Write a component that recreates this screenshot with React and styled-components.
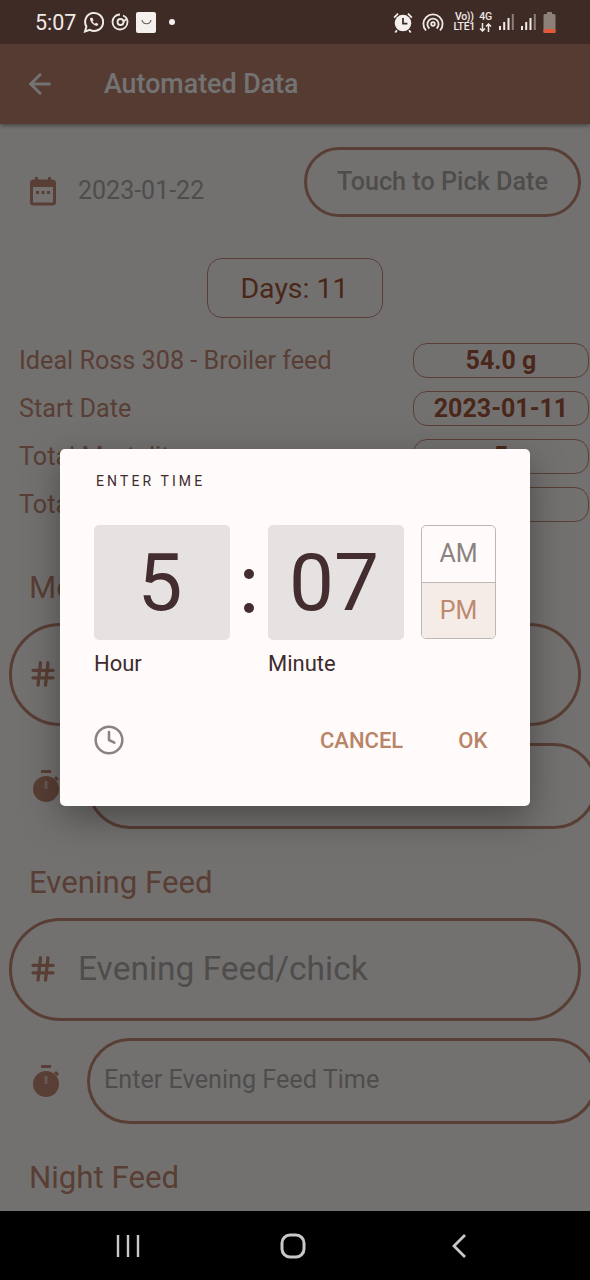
import React from 'react';
import styled, { createGlobalStyle } from 'styled-components';
import { ArrowLeft, Clock, Hash } from 'lucide-react';

const BROWN = '#c48b75';
const MUTED = '#aeaaa8';

const GlobalStyle = createGlobalStyle`
  html, body { margin: 0; padding: 0; background: #000; }
  body { font-family: Roboto, "Liberation Sans", sans-serif; }
  * { box-sizing: border-box; }
`;

const Phone = styled.div`
  position: relative;
  width: 590px;
  height: 1280px;
  overflow: hidden;
  display: flex;
  flex-direction: column;
`;

const StatusBar = styled.div`
  height: 44px;
  flex: none;
  background: #3f2b26;
  color: #efeae6;
  display: flex;
  align-items: center;
  justify-content: space-between;
  padding: 0 34px 0 35px;
`;

const StatusGroup = styled.div`
  display: flex;
  align-items: center;
  gap: 7px;
`;

const Clockface = styled.span`
  font-size: 21.5px;
`;

const BagIcon = styled.span`
  width: 20px;
  height: 21px;
  background: #f4f0ee;
  border-radius: 2px;
  display: flex;
  align-items: center;
  justify-content: center;
`;

const Dot = styled.span`
  width: 6px;
  height: 6px;
  border-radius: 50%;
  background: #f4f0ee;
  margin-left: 6px;
`;

const IconSlot = styled.span`
  display: flex;
  margin-left: ${(p) => p.$left || 0}px;
`;

const TinyStack = styled.span`
  display: flex;
  flex-direction: column;
  align-items: center;
  font-size: 10.5px;
  line-height: 10.5px;
  letter-spacing: -0.3px;
  font-weight: 500;
  color: #efeae6;
  margin: 0 ${(p) => p.$right || 0}px 0 ${(p) => p.$left || 0}px;
`;

const Screen = styled.div`
  flex: 1;
  min-height: 0;
  position: relative;
  display: flex;
  flex-direction: column;
  background: #fffbf9;
  overflow: hidden;
`;

const AppBar = styled.div`
  height: 80px;
  flex: none;
  background: #bd836d;
  color: #fff;
  display: flex;
  align-items: center;
  padding-left: 24px;
  gap: 48px;
  font-size: 26.8px;
  font-weight: 500;
  box-shadow: 0 2px 4px rgba(0, 0, 0, 0.35);
`;

const Content = styled.div`
  display: flex;
  flex-direction: column;
`;

const DateRow = styled.div`
  display: flex;
  align-items: center;
  justify-content: space-between;
  padding: 23px 9px 0 30px;
`;

const DateValue = styled.div`
  display: flex;
  align-items: center;
  gap: 22px;
  font-size: 25px;
  color: ${MUTED};
  padding: 17px 0 0;
`;

const PickButton = styled.div`
  width: 277px;
  height: 70px;
  border: 3px solid ${BROWN};
  border-radius: 35px;
  display: flex;
  align-items: center;
  justify-content: center;
  font-size: 25.2px;
  font-weight: 500;
  color: ${MUTED};
  padding-bottom: 2px;
`;

const DaysBox = styled.div`
  align-self: center;
  width: 176px;
  height: 60px;
  margin: 41px 0 25px -1px;
  border: 1.5px solid ${BROWN};
  border-radius: 15px;
  display: flex;
  align-items: center;
  justify-content: center;
  font-size: 28.5px;
  color: #a4583a;
`;

const InfoList = styled.div`
  display: flex;
  flex-direction: column;
  gap: 13px;
  margin-bottom: 48px;
`;

const InfoRow = styled.div`
  display: flex;
  align-items: center;
  justify-content: space-between;
  padding-left: 19px;
  height: 35px;
`;

const InfoLabel = styled.span`
  font-size: 25.2px;
  color: ${BROWN};
`;

const InfoValue = styled.span`
  width: 176px;
  height: 35px;
  margin-right: 1px;
  border: 1.8px solid ${BROWN};
  border-radius: 14px;
  display: flex;
  align-items: center;
  justify-content: center;
  font-size: 25px;
  font-weight: 700;
  color: #a4583a;
`;

const SectionTitle = styled.div`
  font-size: 31.2px;
  color: ${BROWN};
  padding-left: 29px;
  height: 36px;
  line-height: 36px;
`;

const FeedInput = styled.div`
  width: 572px;
  height: 103px;
  margin: 17px 0 0 9px;
  border: 3px solid ${BROWN};
  border-radius: 52px;
  display: flex;
  align-items: center;
  padding: 0 0 2px 16px;
  gap: 20px;
  font-size: 33.5px;
  color: ${MUTED};
`;

const TimeRow = styled.div`
  display: flex;
  align-items: center;
  margin: 17px 0 36px 0;
  padding-left: 33px;
  & > svg {
    flex: none;
  }
`;

const TimeInput = styled.div`
  width: 510px;
  height: 86px;
  margin-left: 28px;
  flex: none;
  border: 3px solid ${BROWN};
  border-radius: 43px;
  display: flex;
  align-items: center;
  padding: 0 0 3px 14px;
  font-size: 25.2px;
  color: ${MUTED};
`;

const Scrim = styled.div`
  position: absolute;
  inset: 0;
  background: rgba(0, 0, 0, 0.55);
`;

const Dialog = styled.div`
  position: absolute;
  left: 60px;
  top: 405px;
  width: 470px;
  height: 357px;
  background: #fffbfa;
  border-radius: 5px;
  box-shadow: 0 12px 36px rgba(0, 0, 0, 0.35);
  padding: 23px 34px 0 34px;
  color: #3f2b2c;
`;

const DialogTitle = styled.div`
  font-size: 14px;
  letter-spacing: 3.1px;
  line-height: 18px;
  padding-left: 2px;
`;

const Picker = styled.div`
  display: flex;
  margin-top: 35px;
`;

const FieldColumn = styled.div`
  width: 136px;
  display: flex;
  flex-direction: column;
`;

const TimeField = styled.div`
  height: 115px;
  border-radius: 5px;
  background: #e6e2e2;
  display: flex;
  align-items: center;
  justify-content: center;
  padding-right: 4px;
  font-size: 80px;
  line-height: 1;
  color: #432d2f;
`;

const FieldLabel = styled.div`
  margin-top: 10px;
  font-size: 22px;
  line-height: 28px;
`;

const Colon = styled.div`
  width: 38px;
  height: 115px;
  padding-top: 16px;
  display: flex;
  flex-direction: column;
  align-items: center;
  justify-content: center;
  gap: 24px;
  & span {
    width: 10px;
    height: 10px;
    border-radius: 50%;
    background: #432d2f;
  }
`;

const Period = styled.div`
  width: 75px;
  height: 114px;
  margin-left: 17px;
  border: 1.5px solid #bdb8b6;
  border-radius: 5px;
  display: flex;
  flex-direction: column;
  overflow: hidden;
`;

const PeriodOption = styled.div`
  flex: 1;
  display: flex;
  align-items: center;
  justify-content: center;
  font-size: 25px;
  color: ${(p) => (p.$active ? '#bd8a70' : '#8b8382')};
  background: ${(p) => (p.$active ? '#f6ece7' : 'transparent')};
  border-top: ${(p) => (p.$active ? '1.5px solid #bdb8b6' : 'none')};
`;

const DialogActions = styled.div`
  display: flex;
  align-items: center;
  margin: 46px 0 0 -1px;
  color: #8b8382;
`;

const ActionButton = styled.span`
  font-size: 22px;
  font-weight: 500;
  color: #b98468;
  margin-left: ${(p) => p.$left}px;
`;

const NavBar = styled.div`
  height: 69px;
  flex: none;
  background: #000;
  display: flex;
  align-items: center;
`;

const NavButton = styled.span`
  display: flex;
  margin-left: ${(p) => p.$left}px;
`;

const CalendarIcon = () => (
  <svg width="26" height="30" viewBox="0 0 26 30" fill="none">
    <rect x="1.5" y="5" width="23" height="23" rx="2" stroke={BROWN} strokeWidth="3" />
    <rect x="1.5" y="5" width="23" height="6" fill={BROWN} />
    <rect x="5" y="1" width="3" height="5" fill={BROWN} />
    <rect x="18" y="1" width="3" height="5" fill={BROWN} />
    <rect x="6" y="15" width="3" height="3" fill={BROWN} />
    <rect x="11.5" y="15" width="3" height="3" fill={BROWN} />
    <rect x="17" y="15" width="3" height="3" fill={BROWN} />
  </svg>
);

const TimerIcon = () => (
  <svg width="26" height="33" viewBox="0 0 26 33">
    <rect x="8" y="0" width="10" height="3" fill={BROWN} />
    <circle cx="13" cy="19" r="13" fill={BROWN} />
    <path d="M22 7 l3 3" stroke={BROWN} strokeWidth="3" />
    <rect x="11.5" y="11" width="3" height="8" fill="#fffbf9" opacity="0.5" />
  </svg>
);

const WhatsAppIcon = () => (
  <svg width="21" height="22" viewBox="0 0 21 22" fill="none" stroke="#efeae6" strokeWidth="2">
    <path d="M2 20.5 l1.4-5 A9 9 0 1 1 6.8 18.8 Z" />
    <path d="M7 7 c0 4 3 7 7 8 l1.5-2 -2.5-1.2 -1 1 c-1-.5-2-1.5-2.5-2.6 l1-1 -1-2.4 Z" fill="#efeae6" stroke="none" />
  </svg>
);

const SwirlIcon = () => (
  <svg width="18" height="18" viewBox="0 0 18 18" fill="none" stroke="#efeae6" strokeWidth="1.8">
    <path d="M9 1.5 A7.5 7.5 0 1 0 16.5 9 A7 7 0 0 0 12 2.5" />
    <circle cx="9.5" cy="9" r="3" />
    <path d="M12.5 9 L15 6" />
  </svg>
);

const AlarmIcon = () => (
  <svg width="20" height="21" viewBox="0 0 18 19">
    <circle cx="9" cy="10" r="7.5" fill="#f4f0ee" />
    <path d="M9 5.5 V10.5 H13" stroke="#3f2b26" strokeWidth="1.6" fill="none" />
    <path d="M1 5 L4.5 1.5 M17 5 L13.5 1.5 M3.5 16.5 L2 18.5 M14.5 16.5 L16 18.5" stroke="#f4f0ee" strokeWidth="1.6" />
  </svg>
);

const HotspotIcon = () => (
  <svg width="22" height="20" viewBox="0 0 22 19" fill="none" stroke="#efeae6" strokeWidth="1.8">
    <path d="M4 18 A9.6 9.6 0 1 1 18 18" />
    <path d="M7.4 16 A5.6 5.6 0 1 1 14.6 16" />
    <circle cx="11" cy="11.5" r="1.8" />
  </svg>
);

const DataArrows = () => (
  <svg width="13" height="9" viewBox="0 0 13 9" fill="none" stroke="#efeae6" strokeWidth="1.5">
    <path d="M3.5 0 V8 M1 5.5 L3.5 8 L6 5.5" />
    <path d="M9.5 9 V1 M7 3.5 L9.5 1 L12 3.5" />
  </svg>
);

const SignalIcon = () => (
  <svg width="15" height="18" viewBox="0 0 15 18">
    <rect x="0" y="13" width="2" height="4" fill="#efeae6" />
    <rect x="4.2" y="9" width="2" height="8" fill="#efeae6" />
    <rect x="8.5" y="5" width="2" height="12" fill="#efeae6" />
    <rect x="12.8" y="1" width="2" height="16" fill="#8d8079" />
  </svg>
);

const BatteryIcon = () => (
  <svg width="13" height="21" viewBox="0 0 13 21">
    <rect x="4" y="0" width="5" height="2" fill="#8d8079" />
    <rect x="0.5" y="2" width="12" height="19" rx="1.5" fill="#8d8079" />
    <rect x="0.5" y="17" width="12" height="4" rx="1" fill="#e0593a" />
  </svg>
);

const feeds = ['Morning', 'Evening'];
const infoRows = [
  ['Ideal Ross 308 - Broiler feed', '54.0 g'],
  ['Start Date', '2023-01-11'],
  ['Total Mortality', '5'],
  ['Total Feed', '0'],
];

export default function App() {
  return (
    <Phone>
      <GlobalStyle />
      <StatusBar>
        <StatusGroup>
          <Clockface>5:07</Clockface>
          <WhatsAppIcon />
          <SwirlIcon />
          <BagIcon>
            <svg width="11" height="6" viewBox="0 0 11 6" fill="none" stroke="#6d5b55" strokeWidth="1.2">
              <path d="M1 1 C2 6 9 6 10 1" />
            </svg>
          </BagIcon>
          <Dot />
        </StatusGroup>
        <StatusGroup>
          <AlarmIcon />
          <IconSlot $left={2}>
            <HotspotIcon />
          </IconSlot>
          <TinyStack $left={3} $right={-3}>
            <span>Vo))</span>
            <span>LTE1</span>
          </TinyStack>
          <TinyStack>
            <span>4G</span>
            <DataArrows />
          </TinyStack>
          <SignalIcon />
          <SignalIcon />
          <BatteryIcon />
        </StatusGroup>
      </StatusBar>
      <Screen>
        <AppBar>
          <ArrowLeft size={32} strokeWidth={2.2} />
          Automated Data
        </AppBar>
        <Content>
          <DateRow>
            <DateValue>
              <CalendarIcon />
              2023-01-22
            </DateValue>
            <PickButton>Touch to Pick Date</PickButton>
          </DateRow>
          <DaysBox>Days: 11</DaysBox>
          <InfoList>
            {infoRows.map(([label, value]) => (
              <InfoRow key={label}>
                <InfoLabel>{label}</InfoLabel>
                <InfoValue>{value}</InfoValue>
              </InfoRow>
            ))}
          </InfoList>
          {feeds.map((name) => (
            <React.Fragment key={name}>
              <SectionTitle>{name} Feed</SectionTitle>
              <FeedInput>
                <Hash size={30} color={BROWN} strokeWidth={2.6} />
                {name} Feed/chick
              </FeedInput>
              <TimeRow>
                <TimerIcon />
                <TimeInput>Enter {name} Feed Time</TimeInput>
              </TimeRow>
            </React.Fragment>
          ))}
          <SectionTitle>Night Feed</SectionTitle>
        </Content>
        <Scrim />
        <Dialog>
          <DialogTitle>ENTER TIME</DialogTitle>
          <Picker>
            <FieldColumn>
              <TimeField>5</TimeField>
              <FieldLabel>Hour</FieldLabel>
            </FieldColumn>
            <Colon>
              <span />
              <span />
            </Colon>
            <FieldColumn>
              <TimeField>07</TimeField>
              <FieldLabel>Minute</FieldLabel>
            </FieldColumn>
            <Period>
              <PeriodOption>AM</PeriodOption>
              <PeriodOption $active>PM</PeriodOption>
            </Period>
          </Picker>
          <DialogActions>
            <Clock size={32} strokeWidth={1.9} />
            <ActionButton $left={195}>CANCEL</ActionButton>
            <ActionButton $left={55}>OK</ActionButton>
          </DialogActions>
        </Dialog>
      </Screen>
      <NavBar>
        <NavButton $left={116}>
          <svg width="24" height="24" viewBox="0 0 24 24" stroke="#c8c8c8" strokeWidth="2.4">
            <path d="M2 1 V23 M12 1 V23 M22 1 V23" />
          </svg>
        </NavButton>
        <NavButton $left={140}>
          <svg width="26" height="26" viewBox="0 0 26 26" fill="none" stroke="#c8c8c8" strokeWidth="3">
            <rect x="2" y="2" width="22" height="22" rx="8" />
          </svg>
        </NavButton>
        <NavButton $left={145}>
          <svg width="16" height="26" viewBox="0 0 16 26" fill="none" stroke="#c8c8c8" strokeWidth="2.8">
            <path d="M14 2 L3 13 L14 24" />
          </svg>
        </NavButton>
      </NavBar>
    </Phone>
  );
}
